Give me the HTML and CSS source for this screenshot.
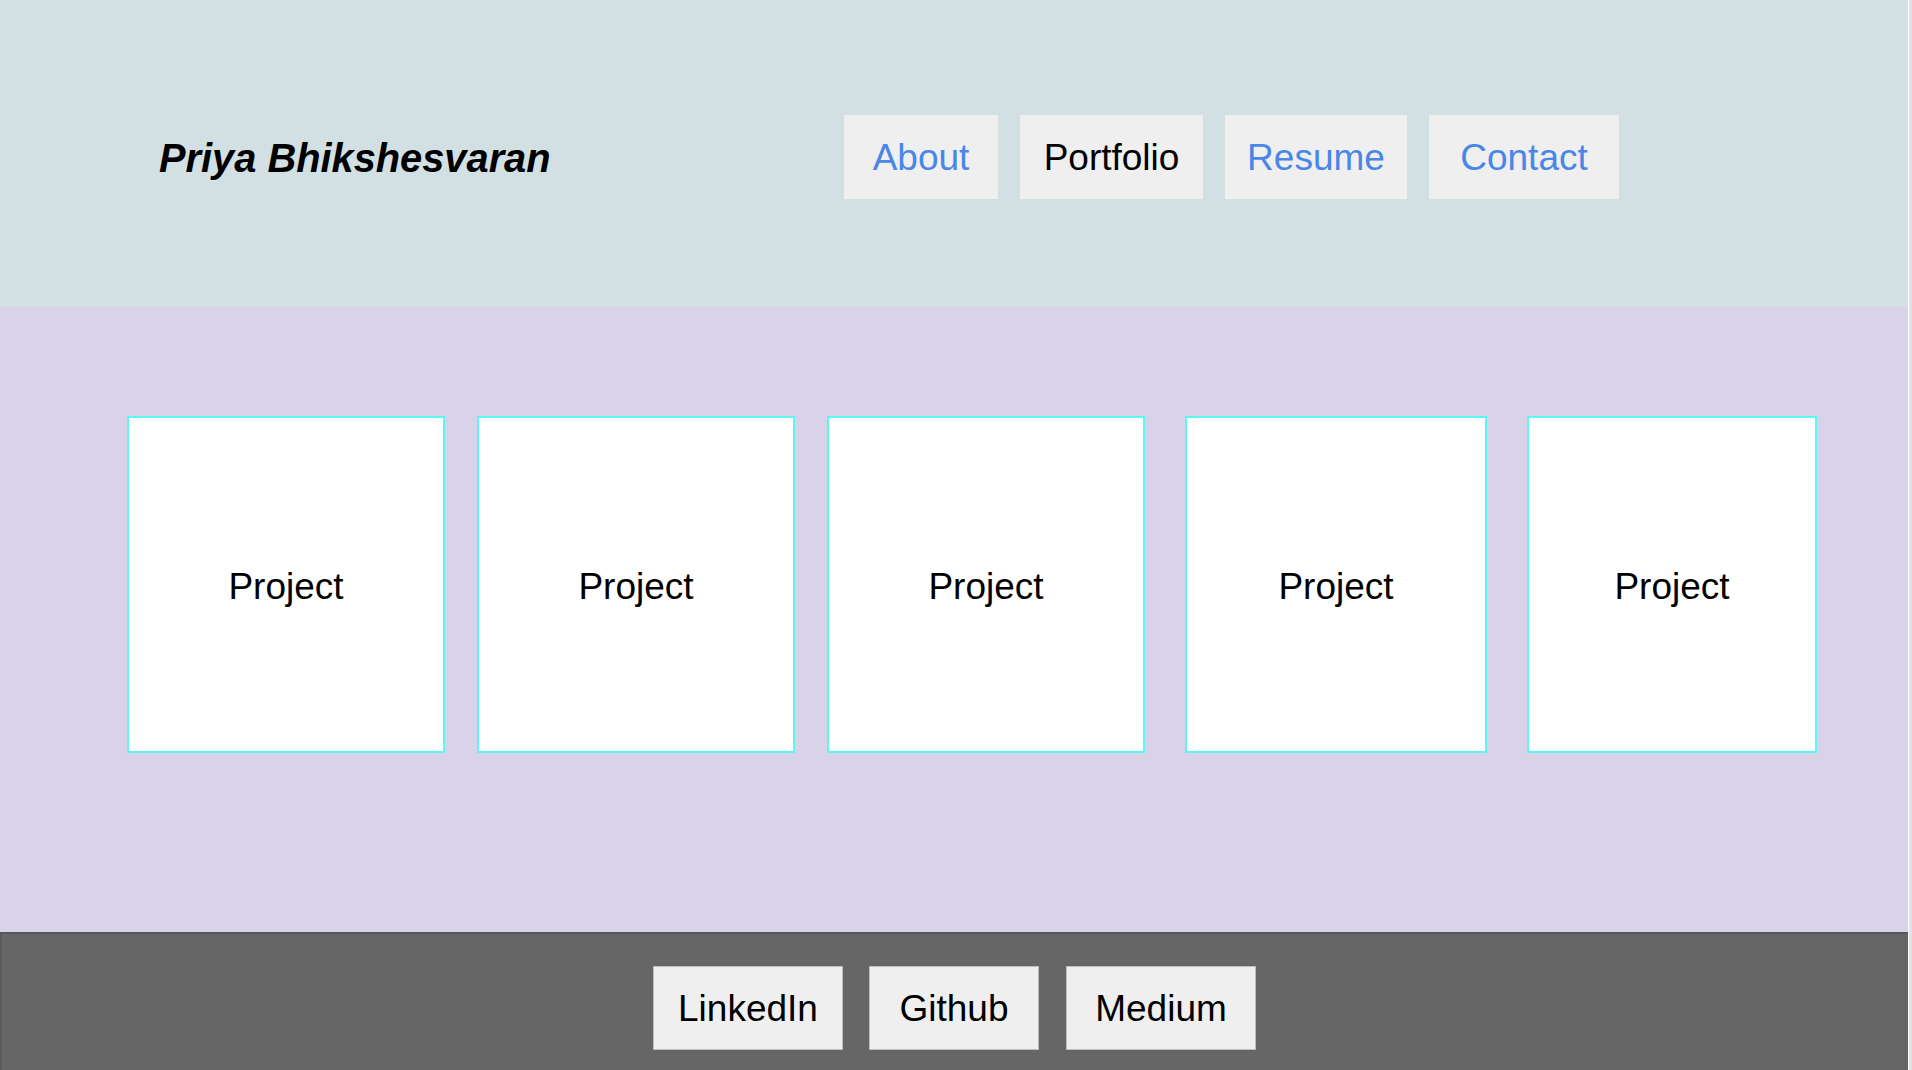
FILE: index.html
```html
<!DOCTYPE html>
<html lang="en">
<head>
<meta charset="utf-8">
<title>Priya Bhikshesvaran</title>
<link rel="stylesheet" href="styles.css">
</head>
<body>
<div class="page">
  <header class="header">
    <div class="name">Priya Bhikshesvaran</div>
    <nav class="nav">
      <a class="nav-link w-about" href="#">About</a>
      <a class="nav-link w-portfolio current" href="#">Portfolio</a>
      <a class="nav-link w-resume" href="#">Resume</a>
      <a class="nav-link w-contact" href="#">Contact</a>
    </nav>
  </header>
  <main class="main">
    <div class="cards">
      <div class="card card-a">Project</div>
      <div class="card card-a">Project</div>
      <div class="card card-a">Project</div>
      <div class="card card-b">Project</div>
      <div class="card card-c">Project</div>
    </div>
  </main>
  <footer class="footer">
    <a class="social w-linkedin" href="#">LinkedIn</a>
    <a class="social w-github" href="#">Github</a>
    <a class="social w-medium" href="#">Medium</a>
  </footer>
</div>
</body>
</html>
```

FILE: styles.css
```css
html, body {
  margin: 0;
  padding: 0;
  height: 100%;
  overflow: hidden;
}

body {
  background: #e2e2e2;
  font-family: "Liberation Sans", Arial, sans-serif;
}

.page {
  width: 1908px;
  height: 1070px;
  border-right: 1px solid #ffffff;
  display: flex;
  flex-direction: column;
}

.header {
  height: 307px;
  box-sizing: border-box;
  background: #d2dfe3;
  border-bottom: 1px solid #d6e1e6;
  padding: 115px 0 0 159px;
  display: flex;
  align-items: flex-start;
}

.name {
  width: 685px;
  height: 84px;
  box-sizing: border-box;
  padding-top: 1px;
  line-height: 84px;
  font-size: 39.8px;
  font-weight: bold;
  font-style: italic;
  color: #000;
}

.nav {
  display: flex;
  gap: 22px;
}

.nav-link {
  display: block;
  height: 84px;
  box-sizing: border-box;
  padding-top: 1px;
  line-height: 83px;
  text-align: center;
  background: #efefef;
  color: #4a86e8;
  font-size: 37px;
  text-decoration: none;
}

.nav-link.current { color: #000; }

.w-about { width: 154px; }
.w-portfolio { width: 183px; }
.w-resume { width: 182px; }
.w-contact { width: 190px; }

.main {
  height: 625px;
  box-sizing: border-box;
  background: #d9d3e9;
  padding: 109px 0 0 127px;
}

.cards {
  display: flex;
  gap: 32px;
}

.card {
  height: 337px;
  box-sizing: border-box;
  background: #ffffff;
  border: 2px solid #5cf6f6;
  display: flex;
  align-items: center;
  justify-content: center;
  font-size: 37px;
  color: #000;
  padding-top: 4px;
}

.card-a { width: 318px; }
.card-b { width: 302px; margin-left: 8px; }
.card-c { width: 290px; margin-left: 8px; }

.footer {
  flex: 1;
  background: #666666;
  border-top: 2px solid #575757;
  border-left: 2px solid #5a5a5a;
  box-sizing: border-box;
  padding: 32px 0 0 651px;
  display: flex;
  align-items: flex-start;
  gap: 26px;
}

.social {
  display: block;
  height: 84px;
  line-height: 84px;
  box-sizing: border-box;
  border: 1px solid #bdbdbd;
  background: #efefef;
  color: #000;
  text-align: center;
  font-size: 37px;
  text-decoration: none;
}

.w-linkedin { width: 190px; }
.w-github { width: 170px; }
.w-medium { width: 190px; margin-left: 1px; }
```
